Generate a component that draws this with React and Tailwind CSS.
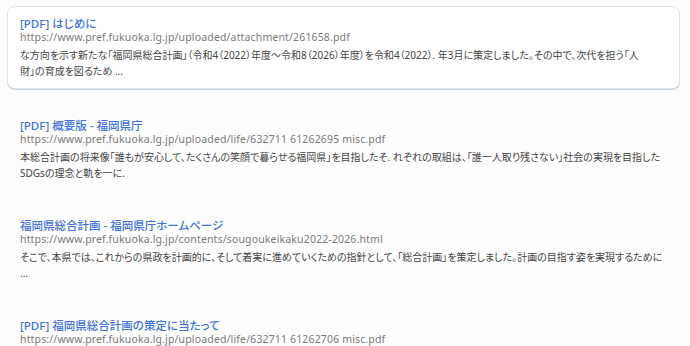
import React from 'react';

const results = [
  {
    title: '[PDF] はじめに',
    url: 'https://www.pref.fukuoka.lg.jp/uploaded/attachment/261658.pdf',
    lines: [
      'な方向を示す新たな「福岡県総合計画」（令和4（2022）年度～令和8（2026）年度）を令和4（2022）. 年3月に策定しました。その中で、次代を担う「人',
      '財」の育成を図るため ...',
    ],
    active: true,
  },
  {
    title: '[PDF] 概要版 - 福岡県庁',
    url: 'https://www.pref.fukuoka.lg.jp/uploaded/life/632711 61262695 misc.pdf',
    lines: [
      '本総合計画の将来像「誰もが安心して、たくさんの笑顔で暮らせる福岡県」を目指したそ. れぞれの取組は、「誰一人取り残さない」社会の実現を目指した',
      'SDGsの理念と軌を一に.',
    ],
  },
  {
    title: '福岡県総合計画 - 福岡県庁ホームページ',
    url: 'https://www.pref.fukuoka.lg.jp/contents/sougoukeikaku2022-2026.html',
    lines: [
      'そこで、本県では、これからの県政を計画的に、そして着実に進めていくための指針として、「総合計画」を策定しました。計画の目指す姿を実現するために',
      '...',
    ],
  },
  {
    title: '[PDF] 福岡県総合計画の策定に当たって',
    url: 'https://www.pref.fukuoka.lg.jp/uploaded/life/632711 61262706 misc.pdf',
    lines: [],
  },
];

const ResultItem = ({ item }) => (
  <div
    className={`rounded-lg border px-[12px] pt-[10px] pb-[9px] ${
      item.active
        ? 'bg-white border-[#e2e4e9] shadow-[0_1px_0_#c6d2ea] mb-[19px]'
        : 'border-transparent mb-[17px]'
    }`}
  >
    <div className="text-[11.5px] leading-[14px] font-medium text-[#3f73d8] whitespace-nowrap">
      {item.title}
    </div>
    <div className="text-[10.5px] leading-[12px] tracking-[0.15px] text-[#7a7a7a] whitespace-nowrap">
      {item.url}
    </div>
    <div className="mt-[4px] text-[10px] leading-[16px] text-[#444] whitespace-nowrap">
      {item.lines.map((line, i) => (
        <div key={i}>{line}</div>
      ))}
    </div>
  </div>
);

export default function App() {
  return (
    <div
      className="w-[690px] h-[346px] overflow-hidden bg-[#fdfdfd] pl-[7px] pr-[10px] pt-[6px] [font-feature-settings:'palt']"
      style={{ fontFamily: '"Noto Sans", "Noto Sans CJK JP", sans-serif' }}
    >
      {results.map((item, i) => (
        <ResultItem key={i} item={item} />
      ))}
    </div>
  );
}
